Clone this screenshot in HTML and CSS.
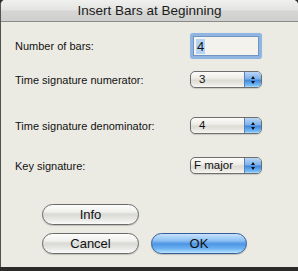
FILE: index.html
```html
<!DOCTYPE html>
<html>
<head>
<meta charset="utf-8">
<link rel="stylesheet" href="styles.css">
</head>
<body>
<div class="window">
  <div class="titlebar">Insert Bars at Beginning</div>
  <div class="content">
    <div class="row row-1">
      <span class="label">Number of bars:</span>
      <div class="field"><span class="sel">4</span></div>
    </div>
    <div class="row row-2">
      <span class="label">Time signature numerator:</span>
      <div class="popup"><span class="val">3</span><span class="arrows"><i class="up"></i><i class="down"></i></span></div>
    </div>
    <div class="row row-3">
      <span class="label">Time signature denominator:</span>
      <div class="popup"><span class="val">4</span><span class="arrows"><i class="up"></i><i class="down"></i></span></div>
    </div>
    <div class="row row-4">
      <span class="label">Key signature:</span>
      <div class="popup"><span class="val val-wide">F major</span><span class="arrows"><i class="up"></i><i class="down"></i></span></div>
    </div>
    <div class="buttons">
      <div class="btnrow"><div class="btn">Info</div></div>
      <div class="btnrow btnrow-2"><div class="btn">Cancel</div><div class="btn btn-ok">OK</div></div>
    </div>
  </div>
</div>
</body>
</html>
```
FILE: styles.css
```css
html, body {
  margin: 0;
  padding: 0;
}
body {
  width: 298px;
  height: 271px;
  background: #2d2b29;
  overflow: hidden;
  font-family: "Liberation Sans", Arial, sans-serif;
  color: #111;
}
.window {
  height: 267px;
  background: #ecebe3;
  border-radius: 5px 5px 0 0;
  border-left: 1px solid #55524e;
  overflow: hidden;
}
.titlebar {
  height: 21px;
  border-bottom: 1px solid #8a8a8a;
  background: linear-gradient(#f0f0ee 0%, #e4e4e2 45%, #d5d5d3 55%, #cfcfcd 100%);
  text-align: center;
  font-size: 13.5px;
  line-height: 22px;
  color: #1a1a1a;
}
.content {
  display: flex;
  flex-direction: column;
  padding-left: 14px;
}
.row {
  display: flex;
  align-items: center;
  justify-content: space-between;
  padding-right: 36px;
  font-size: 11px;
}
.label {
  color: #111;
}
.row-1 { margin-top: 11px; height: 26px; }
.row-2 { margin-top: 12px; height: 17px; }
.row-3 { margin-top: 29px; height: 17px; }
.row-4 { margin-top: 23px; height: 17px; }

.field {
  box-sizing: border-box;
  width: 72px;
  height: 26px;
  border: 3px solid #8fb5e0;
  border-radius: 3px;
  box-shadow: inset 0 0 0 1px #6f95c4, 0 0 1px #b9d1ee;
  background: #f3f2ec;
  padding: 3px 0 0 3px;
  font-size: 13px;
}
.sel {
  background: #b5d3f4;
  padding: 0 1px;
  line-height: 15px;
  display: inline-block;
}

.popup {
  box-sizing: border-box;
  width: 72px;
  height: 17px;
  border: 1px solid #6e6e6e;
  border-radius: 5px;
  background: linear-gradient(#fbfbf9 0%, #efeee8 40%, #dcdbd4 55%, #e9e8e2 80%, #f7f7f3 100%);
  display: flex;
  overflow: hidden;
  box-shadow: 0 1px 1px rgba(0,0,0,0.15);
}
.val {
  flex: 1;
  padding-left: 8px;
  font-size: 11.5px;
  line-height: 15px;
}
.val-wide {
  padding-left: 3px;
}
.arrows {
  width: 16px;
  border-left: 1px solid #5d7fb8;
  background: linear-gradient(#b9d6f6 0%, #7db2ec 45%, #3f8ae1 55%, #79bdf5 90%, #b6e0fb 100%);
  display: flex;
  flex-direction: column;
  align-items: center;
  justify-content: center;
  gap: 2px;
}
.arrows i {
  width: 0;
  height: 0;
  border-left: 2.5px solid transparent;
  border-right: 2.5px solid transparent;
}
.arrows .up { border-bottom: 3px solid #111; }
.arrows .down { border-top: 3px solid #111; }

.buttons {
  display: flex;
  flex-direction: column;
  margin-top: 30px;
  padding-left: 27px;
  gap: 8px;
}
.btnrow {
  display: flex;
  gap: 12px;
}
.btn {
  box-sizing: border-box;
  width: 97px;
  height: 21px;
  border: 1px solid #6b6b6b;
  border-radius: 11px;
  background: linear-gradient(#fdfdfc 0%, #f0f0ee 35%, #d9d9d6 50%, #e8e8e5 75%, #fbfbfa 100%);
  text-align: center;
  font-size: 13px;
  line-height: 19px;
  color: #111;
  box-shadow: 0 1px 1px rgba(0,0,0,0.18);
}
.btn-ok {
  width: 96px;
  border-color: #345c9a;
  background: linear-gradient(#c9e2fb 0%, #8cc0f2 35%, #4d94e5 52%, #6fb4f2 78%, #bfe6fd 100%);
}
```
